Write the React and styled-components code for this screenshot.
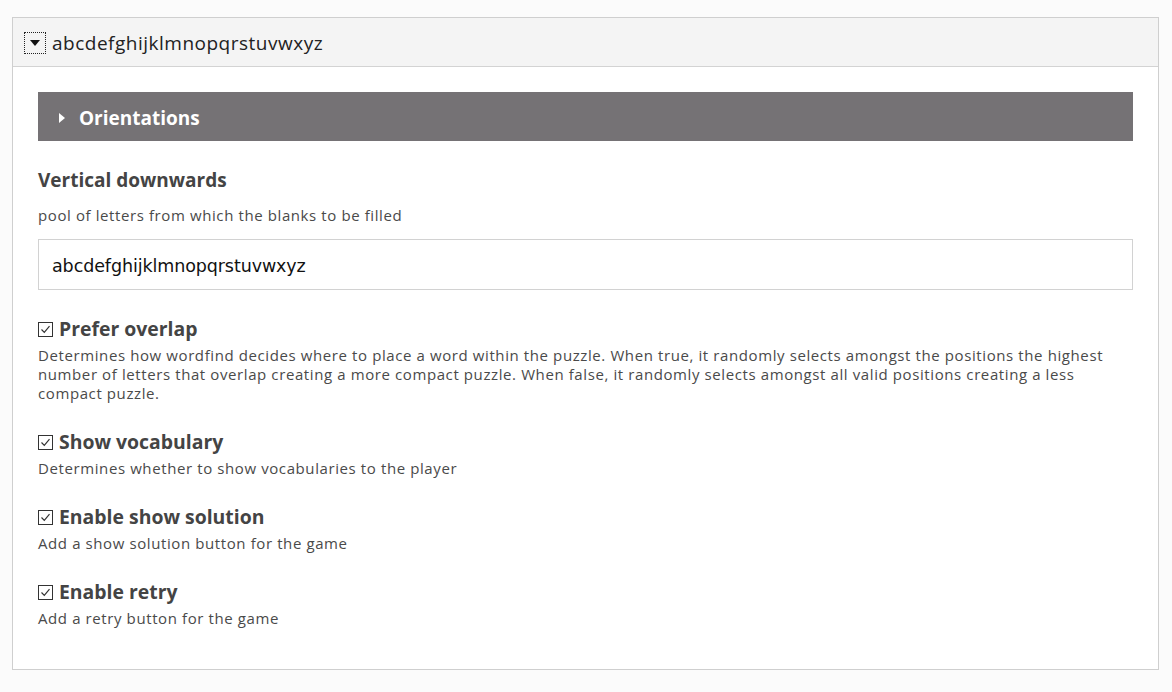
import React from "react";
import styled, { createGlobalStyle } from "styled-components";

const Global = createGlobalStyle`
  html, body {
    margin: 0;
    padding: 0;
    background: #fbfbfb;
    font-family: "Open Sans", "Noto Sans", sans-serif;
    color: #444;
  }
  * { box-sizing: border-box; }
`;

const Page = styled.div`
  padding: 17px 13px 22px 12px;
`;

const Panel = styled.div`
  background: #fff;
  border: 1px solid #cfcfcf;
`;

const Header = styled.div`
  display: flex;
  align-items: center;
  gap: 6px;
  height: 49px;
  padding: 1px 11px 0;
  background: #f4f4f4;
  border-bottom: 1px solid #d3d3d3;
  font-size: 19px;
  letter-spacing: 0.5px;
  color: #222;
`;

const Toggle = styled.span`
  display: flex;
  align-items: center;
  justify-content: center;
  width: 22px;
  height: 22px;
  border: 1px dotted #222;
`;

const Body = styled.div`
  padding: 25px 25px 41px 25px;
`;

const Bar = styled.div`
  display: flex;
  align-items: center;
  gap: 14px;
  height: 49px;
  padding: 2px 21px 0;
  background: #757275;
  color: #fff;
  font-size: 19px;
  font-weight: 700;
`;

const Title = styled.div`
  margin-top: 26px;
  font-size: 19px;
  font-weight: 700;
  line-height: 26px;
  color: #444;
`;

const Description = styled.div`
  margin-top: ${props => props.$top}px;
  font-size: 15px;
  letter-spacing: 0.6px;
  line-height: 19px;
  color: #4a4a4a;
`;

const Field = styled.div`
  margin-top: 14px;
  height: 51px;
  display: flex;
  align-items: center;
  padding: 2px 13px 0;
  border: 1px solid #d2d2d2;
  background: #fff;
  font-family: "DejaVu Sans", sans-serif;
  font-size: 17.5px;
  letter-spacing: -0.1px;
  color: #111;
`;

const Option = styled.div`
  margin-top: 26px;
`;

const Label = styled.div`
  display: flex;
  align-items: center;
  gap: 6px;
  font-size: 19.4px;
  font-weight: 700;
  line-height: 26px;
  color: #444;
`;

const Box = styled.span`
  display: flex;
  align-items: center;
  justify-content: center;
  width: 15px;
  height: 15px;
  border: 1px solid #333;
  background: #fff;
`;

function Check() {
  return (
    <Box>
      <svg width="11" height="11" viewBox="0 0 11 11">
        <path d="M1.5 5.5 L4.3 8.3 L9.5 2.2" fill="none" stroke="#333" strokeWidth="1.2" />
      </svg>
    </Box>
  );
}

const options = [
  {
    label: "Prefer overlap",
    text: "Determines how wordfind decides where to place a word within the puzzle. When true, it randomly selects amongst the positions the highest number of letters that overlap creating a more compact puzzle. When false, it randomly selects amongst all valid positions creating a less compact puzzle.",
  },
  { label: "Show vocabulary", text: "Determines whether to show vocabularies to the player" },
  { label: "Enable show solution", text: "Add a show solution button for the game" },
  { label: "Enable retry", text: "Add a retry button for the game" },
];

export default function App() {
  return (
    <Page>
      <Global />
      <Panel>
        <Header>
          <Toggle>
            <svg width="10" height="6" viewBox="0 0 10 6">
              <path d="M0 0 H10 L5 6 Z" fill="#111" />
            </svg>
          </Toggle>
          abcdefghijklmnopqrstuvwxyz
        </Header>
        <Body>
          <Bar>
            <svg width="6" height="10" viewBox="0 0 6 10">
              <path d="M0 0 L6 5 L0 10 Z" fill="#fff" />
            </svg>
            Orientations
          </Bar>
          <Title>Vertical downwards</Title>
          <Description $top={13}>pool of letters from which the blanks to be filled</Description>
          <Field>abcdefghijklmnopqrstuvwxyz</Field>
          {options.map(o => (
            <Option key={o.label}>
              <Label>
                <Check />
                {o.label}
              </Label>
              <Description $top={4}>{o.text}</Description>
            </Option>
          ))}
        </Body>
      </Panel>
    </Page>
  );
}
